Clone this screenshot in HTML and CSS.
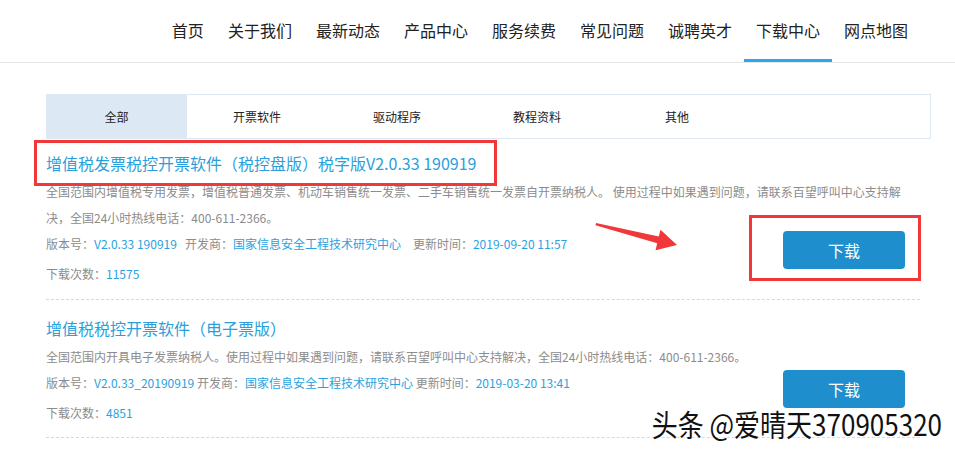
FILE: index.html
```html
<!DOCTYPE html>
<html lang="zh-CN">
<head>
    <meta charset="UTF-8">
    <meta name="viewport" content="width=device-width, initial-scale=1.0">
    <title>下载中心</title>
    <link rel="stylesheet" href="styles.css">
</head>
<body>
    <header class="top">
        <nav class="nav">
            <a href="#">首页</a>
            <a href="#">关于我们</a>
            <a href="#">最新动态</a>
            <a href="#">产品中心</a>
            <a href="#">服务续费</a>
            <a href="#">常见问题</a>
            <a href="#">诚聘英才</a>
            <a href="#" class="active">下载中心</a>
            <a href="#">网点地图</a>
        </nav>
    </header>

    <main class="wrap">
        <div class="tabs">
            <a href="#" class="tab active">全部</a>
            <a href="#" class="tab">开票软件</a>
            <a href="#" class="tab">驱动程序</a>
            <a href="#" class="tab">教程资料</a>
            <a href="#" class="tab">其他</a>
        </div>

        <ul class="list">
            <li class="item">
                <h3 class="item-title">增值税发票税控开票软件（税控盘版）税字版V2.0.33 190919</h3>
                <p class="item-desc">全国范围内增值税专用发票，增值税普通发票、机动车销售统一发票、二手车销售统一发票自开票纳税人。 使用过程中如果遇到问题，请联系百望呼叫中心支持解决，全国24小时热线电话：400-611-2366。</p>
                <p class="item-meta">版本号：<span class="val">V2.0.33 190919</span><span class="sp"></span>开发商：<span class="val">国家信息安全工程技术研究中心</span><span class="sp wide"></span>更新时间：<span class="val">2019-09-20 11:57</span></p>
                <p class="item-count">下载次数：<span class="val">11575</span></p>
                <a href="#" class="btn">下载</a>
            </li>
            <li class="item">
                <h3 class="item-title">增值税税控开票软件（电子票版）</h3>
                <p class="item-desc">全国范围内开具电子发票纳税人。使用过程中如果遇到问题，请联系百望呼叫中心支持解决，全国24小时热线电话：400-611-2366。</p>
                <p class="item-meta">版本号：<span class="val">V2.0.33_20190919</span> 开发商：<span class="val">国家信息安全工程技术研究中心</span> 更新时间：<span class="val">2019-03-20 13:41</span></p>
                <p class="item-count">下载次数：<span class="val">4851</span></p>
                <a href="#" class="btn">下载</a>
            </li>
        </ul>
    </main>

    <!-- screenshot annotations -->
    <div class="mark mark-title"></div>
    <div class="mark mark-btn"></div>
    <svg class="arrow" width="955" height="453" viewBox="0 0 955 453">
        <polygon points="596,223 658.8,236.6 660.5,229.8 677,245 655.5,250.2 657.2,243.2 595.5,225.2" fill="#f0383a"/>
    </svg>

    <div class="watermark">头条 @爱晴天370905320</div>
</body>
</html>
```

FILE: styles.css
```css
body {
    margin: 0;
    padding: 0;
    background: #fff;
    color: #333;
    font-family: "Noto Sans CJK SC", "Liberation Sans", sans-serif;
    position: relative;
    height: 453px;
    overflow: hidden;
}
a {
    text-decoration: none;
    color: inherit;
}
.top {
    border-bottom: 1px solid #e6e6e6;
    height: 62px;
}
.nav {
    display: flex;
    justify-content: flex-end;
    padding-right: 35px;
}
.nav a {
    display: block;
    padding: 0 12px;
    height: 59px;
    line-height: 60px;
    font-size: 16px;
    color: #222;
    border-bottom: 3px solid transparent;
}
.nav a.active {
    border-bottom-color: #2aa6ea;
}
.wrap {
    margin: 31px 24px 0 46px;
}
.tabs {
    display: flex;
    height: 43px;
    border: 1px solid #dfe8f1;
}
.tab {
    width: 140px;
    line-height: 43px;
    text-align: center;
    font-size: 12px;
    color: #222;
}
.tab.active {
    background: #dce9f5;
    width: 141px;
    margin-left: -1px;
}
.list {
    list-style: none;
    margin: 0 11px 0 0;
    padding: 0;
}
.item {
    display: grid;
    grid-template-columns: 1fr auto;
    padding: 16px 0 11px;
    border-bottom: 1px dashed #d8d8d8;
}
.item:first-child {
    padding-top: 12px;
    padding-bottom: 12px;
}
.item-title {
    grid-column: 1 / 3;
    margin: 0;
    font-size: 16px;
    font-weight: normal;
    line-height: 24px;
    color: #2a9fdb;
}
.item-desc {
    grid-column: 1 / 3;
    margin: 4px 0 0;
    width: 866px;
    font-size: 12px;
    line-height: 26px;
    color: #8c8c8c;
}
.item-meta, .item-count {
    grid-column: 1;
    margin: 0;
    font-size: 12px;
    line-height: 26px;
    color: #8c8c8c;
}
.item-count {
    margin-top: 4px;
}
.val {
    color: #2aa2e0;
}
.sp {
    display: inline-block;
    width: 8px;
}
.sp.wide {
    width: 12px;
}
.btn {
    grid-column: 2;
    grid-row: 3 / 5;
    align-self: end;
    width: 122px;
    height: 38px;
    line-height: 38px;
    margin: 0 15px 18px 0;
    background: #1e8fcc;
    border-radius: 4px;
    color: #fff;
    text-align: center;
    font-size: 16px;
}
/* annotations over the screenshot */
.mark {
    position: absolute;
    border: 3px solid #f0383a;
    box-sizing: border-box;
}
.mark-title {
    left: 34px;
    top: 140px;
    width: 463px;
    height: 46px;
}
.mark-btn {
    left: 749px;
    top: 215px;
    width: 172px;
    height: 66px;
}
.arrow {
    position: absolute;
    left: 0;
    top: 0;
    pointer-events: none;
}
.watermark {
    position: absolute;
    right: 13px;
    bottom: 12px;
    font-size: 26px;
    line-height: 30px;
    color: #111;
    transform: scaleY(1.15);
    transform-origin: right bottom;
    text-shadow: 0 0 2px #fff, 0 0 2px #fff, 0 0 3px #fff;
}
```
